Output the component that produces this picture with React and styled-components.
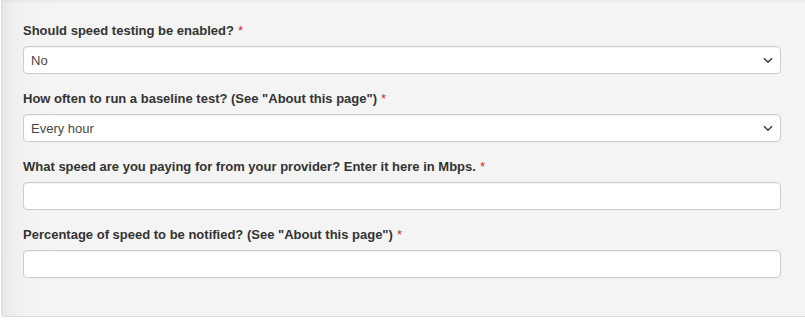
import React from "react";
import styled, { createGlobalStyle } from "styled-components";

const Global = createGlobalStyle`
  html, body { margin: 0; padding: 0; background: #fff; }
  body { font-family: "Liberation Sans", Arial, sans-serif; overflow: hidden; }
`;

const Page = styled.div`
  width: 805px;
  height: 320px;
  padding-left: 1px;
  box-sizing: border-box;
  overflow: hidden;
`;

const Panel = styled.div`
  width: 840px;
  height: 317px;
  box-sizing: border-box;
  background: linear-gradient(to right, #e8e8e8 0px, #f0f0f0 14px, #f3f3f3 30px, #f4f4f4 60px);
  border: 1px solid #dcdcdc;
  border-top: none;
  border-radius: 0 0 4px 4px;
  box-shadow: inset 0 2px 3px rgba(0, 0, 0, 0.04);
  padding: 21px 0 0 21px;
`;

const Form = styled.form`
  width: 758px;
  display: flex;
  flex-direction: column;
  gap: 15px;
`;

const Group = styled.div`
  display: flex;
  flex-direction: column;
  gap: 5px;
`;

const Label = styled.label`
  font-size: 13px;
  line-height: 20px;
  font-weight: bold;
  color: #333;
`;

const Req = styled.span`
  color: #c9302c;
  margin-left: 4px;
  font-weight: normal;
`;

const Field = styled.div`
  height: 28px;
  box-sizing: border-box;
  background: #fff;
  border: 1px solid #cccccc;
  border-radius: 4px;
  box-shadow: inset 0 1px 1px rgba(0, 0, 0, 0.05);
  display: flex;
  align-items: center;
  padding: 0 7px;
  font-size: 13px;
  color: #484848;
`;

const Value = styled.span`
  flex: 1;
`;

const Chevron = () => (
  <svg width="10" height="7" viewBox="0 0 10 7" fill="none" style={{ marginRight: 0 }}>
    <path d="M1 1.2 L5 5.2 L9 1.2" stroke="#3a3a3a" strokeWidth="1.5" />
  </svg>
);

const fields = [
  { label: "Should speed testing be enabled?", value: "No", select: true },
  { label: 'How often to run a baseline test? (See "About this page")', value: "Every hour", select: true },
  { label: "What speed are you paying for from your provider? Enter it here in Mbps.", value: "", select: false },
  { label: 'Percentage of speed to be notified? (See "About this page")', value: "", select: false },
];

export default function App() {
  return (
    <>
      <Global />
      <Page>
        <Panel>
          <Form>
            {fields.map((f) => (
              <Group key={f.label}>
                <Label>
                  {f.label}
                  <Req>*</Req>
                </Label>
                <Field>
                  <Value>{f.value}</Value>
                  {f.select && <Chevron />}
                </Field>
              </Group>
            ))}
          </Form>
        </Panel>
      </Page>
    </>
  );
}
